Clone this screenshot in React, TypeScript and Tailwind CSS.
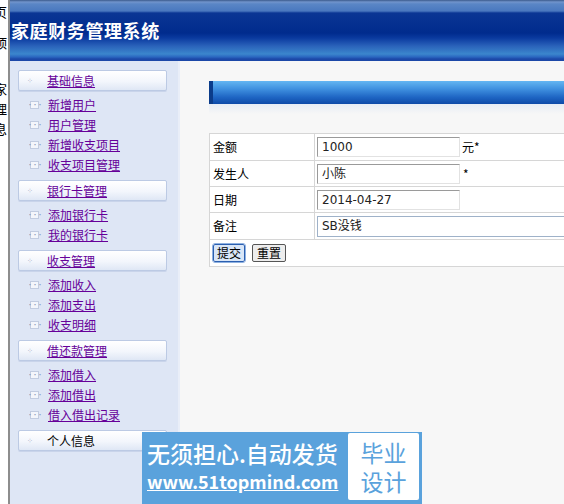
import React from 'react';

const cn = '"Noto Sans CJK SC", "DejaVu Sans", sans-serif';

type Group = { title: string; items: string[]; link?: boolean };

const groups: Group[] = [
  { title: '基础信息', items: ['新增用户', '用户管理', '新增收支项目', '收支项目管理'] },
  { title: '银行卡管理', items: ['添加银行卡', '我的银行卡'] },
  { title: '收支管理', items: ['添加收入', '添加支出', '收支明细'] },
  { title: '借还款管理', items: ['添加借入', '添加借出', '借入借出记录'] },
  { title: '个人信息', items: [], link: false },
];

const ItemIcon = () => (
  <span className="mr-[9px] inline-flex h-[8px] w-[9px] items-center justify-center border border-[#c2cce0] bg-[#f4f6fb]">
    <span className="text-[6px] leading-none tracking-[-1px] text-[#8a97b5]">···</span>
  </span>
);

const GroupHeader = ({ title, link = true }: { title: string; link?: boolean }) => (
  <div className="ml-[8px] flex h-[21px] w-[149px] items-center rounded-[2px] border border-[#bccae4] bg-[linear-gradient(to_bottom,#ffffff_0%,#f3f6fc_55%,#dfe7f5_100%)] shadow-[0_1px_0_#c9d4ea]">
    <span className="ml-[8px] w-[20px] text-[7px] leading-none text-[#9aa6c0]">⁘</span>
    <span className={link ? 'text-[12px] text-[#660099] underline' : 'text-[12px] text-black'}>{title}</span>
  </div>
);

const Sidebar = () => (
  <div className="w-[170px] shrink-0 border-r-2 border-[#e9eef8] bg-[#dee6f5] pt-[9px]" style={{ fontFamily: cn }}>
    {groups.map((g) => (
      <div key={g.title} className="mb-[5px]">
        <GroupHeader title={g.title} link={g.link !== false} />
        <div className="pt-[4px]">
          {g.items.map((it) => (
            <div key={it} className="flex h-[20px] items-center pl-[20px]">
              <ItemIcon />
              <span className="text-[12px] leading-none text-[#660099] underline">{it}</span>
            </div>
          ))}
        </div>
      </div>
    ))}
  </div>
);

const Input = ({ value, w = 'w-[143px]', focus = false }: { value: string; w?: string; focus?: boolean }) => (
  <div
    className={
      'flex items-center bg-white px-[4px] text-[12px] text-[#222] ' +
      w +
      (focus
        ? ' h-[21px] border border-[#9fb2c9]'
        : ' h-[20px] border border-t-[#9a9a9a] border-l-[#9a9a9a] border-r-[#e2e2e2] border-b-[#e2e2e2]')
    }
    style={{ fontFamily: '"DejaVu Sans", "Noto Sans CJK SC", sans-serif' }}
  >
    {value}
  </div>
);

const Row = ({ label, h, children }: { label: string; h: string; children: React.ReactNode }) => (
  <tr className={h}>
    <td className="border border-[#d6d6d6] bg-white pl-[3px] text-[12px]">{label}</td>
    <td className="border border-[#d6d6d6] bg-white pl-[2px]">{children}</td>
  </tr>
);

export default function App() {
  return (
    <div className="flex h-[504px] w-[564px] overflow-hidden bg-white" style={{ fontFamily: cn }}>
      {/* clipped strip of the page behind */}
      <div className="relative w-[10px] shrink-0 overflow-hidden border-r-2 border-[#8d8d8d] bg-white text-[13px] text-black">
        <div className="absolute left-[-6px] top-[5px] leading-none">页</div>
        <div className="absolute left-[-6px] top-[36px] leading-none">顶</div>
        <div className="absolute left-[-6px] top-[82px] leading-none">家</div>
        <div className="absolute left-[-6px] top-[102px] leading-none">理</div>
        <div className="absolute left-[-6px] top-[122px] leading-none">息</div>
      </div>

      <div className="flex min-w-0 flex-1 flex-col">
        <div className="flex h-[61px] shrink-0 items-center bg-[linear-gradient(to_bottom,#3b5a8c_0px,#7194cc_2px,#5a86c6_4px,#4a78bf_11px,#0a3594_13px,#002b8d_33px,#0a3a9f_38px,#2a62ba_46px,#3b86cd_54px,#2a66c0_57px,#1c48a8_59px,#1c48a8_61px)] pl-[1px]">
          <h1 className="mt-[-1px] text-[18px] font-bold tracking-[0.6px] text-white">家庭财务管理系统</h1>
        </div>

        <div className="flex flex-1">
          <Sidebar />
          <div className="relative flex-1 bg-[#f7f7f7] pl-[29px] pt-[20px]">
            <div className="flex h-[23px] bg-[linear-gradient(to_bottom,#64b6f2_0%,#3f90df_35%,#1f66c4_70%,#0d4aa8_100%)]">
              <div className="w-[4px] bg-[#0b3c8a]" />
            </div>
            <div className="h-[10px] bg-[linear-gradient(to_bottom,#e6ecf5,#f7f7f7)]" />

            <table className="mt-[19px] w-[420px] table-fixed border-collapse" style={{ fontFamily: cn }}>
              <colgroup>
                <col className="w-[105px]" />
                <col />
              </colgroup>
              <tbody>
                <Row label="金额" h="h-[27px]">
                  <div className="flex items-center">
                    <Input value="1000" />
                    <span className="ml-[2px] text-[12px]">元*</span>
                  </div>
                </Row>
                <Row label="发生人" h="h-[26px]">
                  <div className="flex items-center">
                    <Input value="小陈" />
                    <span className="ml-[3px] text-[12px]">*</span>
                  </div>
                </Row>
                <Row label="日期" h="h-[26px]">
                  <Input value="2014-04-27" />
                </Row>
                <Row label="备注" h="h-[27px]">
                  <Input value="SB没钱" w="w-[300px]" focus />
                </Row>
                <tr className="h-[27px]">
                  <td colSpan={2} className="border border-[#d6d6d6] bg-white pl-[3px]">
                    <div className="flex gap-[7px]">
                      <button className="h-[18px] rounded-[2px] border border-[#2b5fb0] bg-[#d9e6f7] px-[3px] text-[12px] leading-none outline outline-1 outline-[#8fb1e0]">
                        提交
                      </button>
                      <button className="h-[18px] rounded-[2px] border border-[#555] bg-[#ededed] px-[4px] text-[12px] leading-none">
                        重置
                      </button>
                    </div>
                  </td>
                </tr>
              </tbody>
            </table>
          </div>
        </div>
      </div>

      {/* watermark overlay */}
      <div className="absolute left-[142px] top-[432px] flex h-[72px] w-[280px] items-start bg-[#5aa2dc] pt-[1px]">
        <div className="flex w-[206px] flex-col pl-[5px] pt-[6px] text-white" style={{ fontFamily: '"Noto Sans CJK SC", sans-serif' }}>
          <span className="whitespace-nowrap text-[23px] font-medium leading-[28px]">无须担心.自动发货</span>
          <span className="mt-[2px] whitespace-nowrap text-[18px] font-semibold leading-[24px] underline">www.51topmind.com</span>
        </div>
        <div className="flex h-[67px] w-[71px] flex-col items-center justify-center rounded-[2px] bg-white text-[23px] leading-[29px] text-[#5aa2dc]">
          <span>毕业</span>
          <span>设计</span>
        </div>
      </div>
    </div>
  );
}
